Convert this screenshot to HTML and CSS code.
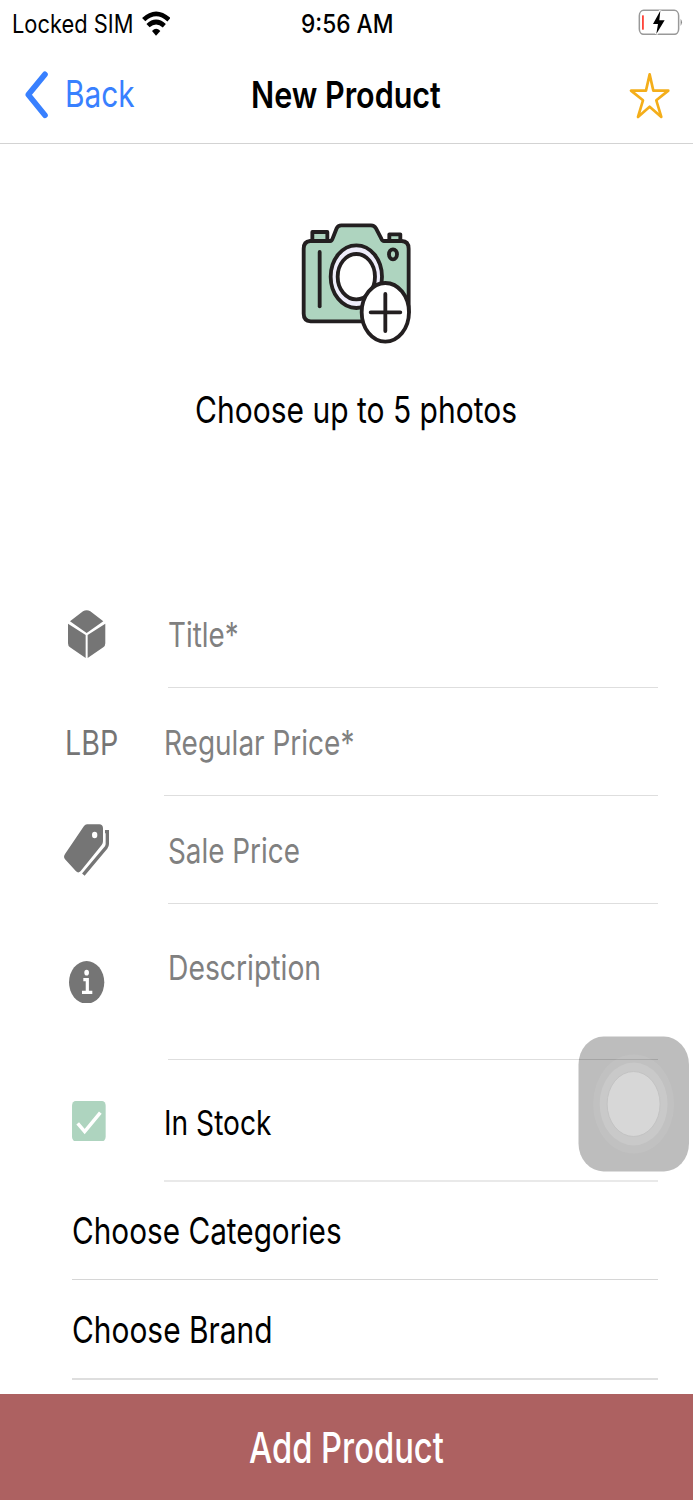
FILE: index.html
```
<!DOCTYPE html>
<html lang="en">
<head>
<meta charset="utf-8">
<title>New Product</title>
<link rel="stylesheet" href="styles.css">
</head>
<body>
<div class="screen">
  <header class="status-bar">
    <div class="carrier">
      <span class="text carrier-name">Locked SIM</span>
      <svg class="wifi" viewBox="425 30 86 76">
        <path d="M430 56Q467 21 506 56" fill="none" stroke="#000" stroke-width="14"/>
        <path d="M443 74Q467 52 492 74" fill="none" stroke="#000" stroke-width="14"/>
        <path d="M455 90Q467 77 480 90L467 104Z"/>
      </svg>
    </div>
    <span class="text clock">9:56 AM</span>
    <svg class="battery" viewBox="876 26 136 80">
      <rect x="880" y="30" width="118" height="72" rx="13" ry="16" fill="none" stroke="#999" stroke-width="4.500"/>
      <path d="M1004 55Q1012 66 1004 77Z" fill="#888"/>
      <rect x="888" y="45" width="5.500" height="43" fill="#ff453a"/>
      <path d="M943 31L921 71H936L931 101L956 60H940Z" stroke="#fff" stroke-width="8"/>
      <path d="M943 31L921 71H936L931 101L956 60H940Z"/>
    </svg>
  </header>

  <nav class="nav-bar">
    <a class="back">
      <svg class="chevron" viewBox="76 210 70 144"><path d="M136 220L86 281L136 343" fill="none" stroke="#3880ff" stroke-width="17" stroke-linecap="round" stroke-linejoin="round"/></svg>
      <span class="text back-label">Back</span>
    </a>
    <h1 class="text title">New Product</h1>
    <svg class="star" viewBox="848 216 124 142"><path d="M910 223L921 272H966L930 301L945 351L910 320L875 351L890 301L854 272H899Z" fill="none" stroke="#f4ae1a" stroke-width="8" stroke-linejoin="round"/></svg>
  </nav>

  <main>
    <section class="photos">
      <svg class="camera" viewBox="60 36 336 370">
        <g stroke="#231f20" stroke-width="11.500" stroke-linejoin="round" stroke-linecap="round">
          <path d="M97 93V66H142V93M328 93V73H361V93" fill="#aed4bf"/>
          <path d="M90 93H151Q155 93 158 85L170 55Q174 46 184 46H273Q283 46 288 55L304 86Q307 93 312 93H365Q386 94 386 116V307L316 334H92Q71 332 71 311V116Q71 95 90 93Z" fill="#aed4bf"/>
          <path d="M119 126V289" fill="none"/>
          <ellipse cx="339" cy="133" rx="12" ry="15" fill="#aed4bf"/>
          <ellipse cx="229" cy="200" rx="77" ry="94" fill="#efedfb"/>
          <ellipse cx="229" cy="200" rx="56" ry="68" fill="#fff"/>
          <ellipse cx="316" cy="307" rx="71" ry="88" fill="#fff"/>
          <path d="M272 307H361M316 252V363"/>
        </g>
      </svg>
      <p class="text photos-label">Choose up to 5 photos</p>
    </section>

    <form class="fields">
      <div class="row">
        <div class="lead">
          <svg class="cube" viewBox="85 60 112 144" fill="#757575"><path d="M91 94L130 64Q141 57 152 64L191 94L141 129ZM85 101L138 135V204L91 172Q85 168 85 160ZM197 101L144 135V204L191 172Q197 168 197 160Z"/></svg>
        </div>
        <div class="field"><span class="text ph-title">Title*</span></div>
      </div>
      <div class="row row-wide">
        <div class="lead"><span class="text currency">LBP</span></div>
        <div class="field"><span class="text ph-regular">Regular Price*</span></div>
      </div>
      <div class="row">
        <div class="lead">
          <svg class="tag" viewBox="74 341 137 157">
            <path fill="#757575" fill-rule="evenodd" d="M143 342H180Q190 342 191 353V393Q191 399 187 404L124 482Q117 490 110 483L77 447Q71 440 77 431L134 347Q138 342 143 342ZM166 364A8 10 0 1 0 166 384A8 10 0 1 0 166 364Z"/>
            <path fill="none" stroke="#757575" stroke-width="10" d="M197 364H204V401Q204 407 200 412L132 493"/>
          </svg>
        </div>
        <div class="field"><span class="text ph-sale">Sale Price</span></div>
      </div>
      <div class="row row-description">
        <div class="lead">
          <svg class="info" viewBox="88 94 106 128">
            <ellipse cx="141" cy="158" rx="53" ry="64" fill="#757575"/>
            <ellipse cx="141" cy="129" rx="7" ry="8.500" fill="#fff"/>
            <path d="M131 150H143V188M127 188H158" fill="none" stroke="#fff" stroke-width="9.500"/>
          </svg>
        </div>
        <div class="field"><span class="text ph-description">Description</span></div>
      </div>
      <div class="row row-wide row-stock">
        <div class="lead">
          <svg class="checkbox" viewBox="96 62 101 121"><rect x="96" y="62" width="101" height="121" rx="11" ry="14" fill="#aed4bf"/><path d="M113 129L134 154L181 97" fill="none" stroke="#fff" stroke-width="10.500"/></svg>
        </div>
        <div class="field"><span class="text label-stock">In Stock</span></div>
      </div>
      <div class="choice choice-categories"><span class="text label-categories">Choose Categories</span></div>
      <div class="choice choice-brand"><span class="text label-brand">Choose Brand</span></div>
    </form>
  </main>

  <button class="submit" type="button"><span class="text submit-label">Add Product</span></button>

  <svg class="assistive-touch" viewBox="0 0 112 136">
    <rect x="0.500" y="0.500" width="110.500" height="135" rx="25" ry="28" fill="#000" fill-opacity=".26"/>
    <g fill="#fff">
      <ellipse cx="55.600" cy="68" rx="40.500" ry="49.500" fill-opacity=".07"/>
      <ellipse cx="55.600" cy="68" rx="34" ry="41.500" fill-opacity=".13"/>
      <ellipse cx="55.600" cy="68" rx="26.500" ry="32.500" fill="#d7d7d7" stroke="#c3c3c3"/>
    </g>
  </svg>
</div>
</body>
</html>
```
FILE: styles.css
```
* {
  box-sizing: border-box;
}

body {
  margin: 0;
  background: #fff;
  color: #000;
  font-family: Inter, "Liberation Sans", sans-serif;
}

svg {
  display: block;
  flex: none;
}

.screen {
  position: relative;
  display: flex;
  flex-direction: column;
  width: 693px;
  height: 1500px;
  overflow: hidden;
}

/* Condensed lettering: each label is narrowed from its left edge. */
.text {
  display: block;
  margin: 0;
  white-space: nowrap;
  font-size: 34.5px;
  font-weight: 400;
  line-height: 44px;
  transform: scaleX(var(--squeeze, 0.815));
  transform-origin: left center;
}

.status-bar {
  display: grid;
  grid-template-columns: 300.8px 1fr auto;
  align-items: center;
  height: 47px;
  padding-right: 9.7px;
}

.carrier {
  display: flex;
  align-items: center;
  padding-left: 12px;
}

.carrier-name {
  --squeeze: 0.868;
  width: 129.7px;
  font-size: 25.2px;
}

.wifi {
  width: 28.7px;
  height: 25.3px;
}

.clock {
  --squeeze: 0.902;
  font-size: 25.2px;
  font-weight: 550;
}

.battery {
  width: 45.3px;
  height: 26.7px;
  margin-top: -3px;
}

.nav-bar {
  display: grid;
  grid-template-columns: 251.3px 1fr auto;
  align-items: center;
  height: 97px;
  padding-right: 22.5px;
  border-bottom: 1.5px solid #d3d3d3;
}

.back {
  display: flex;
  align-items: center;
  gap: 16.3px;
  padding-left: 25.3px;
  color: #3880ff;
}

.chevron {
  width: 23.3px;
  height: 48px;
  margin-top: -1px;
}

.back-label {
  --squeeze: 0.806;
  margin-top: -2px;
  font-size: 37px;
}

.title {
  --squeeze: 0.824;
  font-size: 37px;
  font-weight: 600;
}

.star {
  width: 41.3px;
  height: 47.3px;
  margin-top: 1px;
}

.photos {
  height: 436px;
  padding-top: 78px;
}

.camera {
  width: 112px;
  height: 123.3px;
  margin-left: 299.7px;
}

.photos-label {
  --squeeze: 0.811;
  margin: 42.7px 0 0 194.6px;
  font-size: 37px;
}

.row {
  display: grid;
  grid-template-columns: 168px 1fr;
  height: 108px;
  padding-right: 35px;
  color: #808080;
}

.row-wide {
  grid-template-columns: 164px 1fr;
}

.lead,
.field {
  display: flex;
  align-items: center;
}

.field {
  padding-top: 2px;
  border-bottom: 1.3px solid #dedede;
}

.cube {
  width: 37.3px;
  height: 48px;
  margin-left: 68.3px;
}

.currency {
  --squeeze: 0.83;
  margin: 2px 0 0 64.8px;
  color: #757575;
}

.tag {
  width: 45.7px;
  height: 52.3px;
  margin-left: 64.3px;
}

.ph-title {
  --squeeze: 0.806;
  margin-left: 0.4px;
}

.ph-regular {
  --squeeze: 0.811;
  margin-left: -0.2px;
}

.ph-sale {
  --squeeze: 0.807;
  margin-left: 0;
}

.row-description {
  height: 156px;
}

.row-description .field {
  align-items: flex-start;
  padding-top: 42px;
}

.info {
  width: 35.3px;
  height: 42.7px;
  margin-left: 69.3px;
}

.ph-description {
  --squeeze: 0.82;
  margin-left: -0.3px;
}

.row-stock {
  height: 121.5px;
  color: #000;
}

.row-stock .field {
  padding-top: 6px;
  border-bottom-width: 2px;
  border-color: #e9e9e9;
}

.checkbox {
  width: 33.7px;
  height: 40.3px;
  margin-left: 72px;
}

.label-stock {
  --squeeze: 0.816;
}

.choice {
  display: flex;
  align-items: center;
  height: 98.5px;
  margin: 0 35px 0 72px;
  padding-top: 2px;
  border-bottom: 1.3px solid #d6d6d6;
}

.choice .text {
  font-size: 37px;
}

.choice-brand {
  height: 100px;
  border-bottom: 2px solid #dedede;
}

.label-categories {
  --squeeze: 0.804;
}

.label-brand {
  --squeeze: 0.808;
}

.submit {
  display: flex;
  align-items: center;
  height: 106px;
  margin-top: auto;
  padding: 0 0 0 248.5px;
  border: 0;
  background: #ad6161;
  color: #fff;
  font-family: inherit;
}

.submit-label {
  --squeeze: 0.761;
  font-size: 43px;
  font-weight: 500;
}

/* Floating system control, drawn above the form. */
.assistive-touch {
  position: absolute;
  top: 1036px;
  left: 578px;
  width: 112px;
  height: 136px;
}
```
